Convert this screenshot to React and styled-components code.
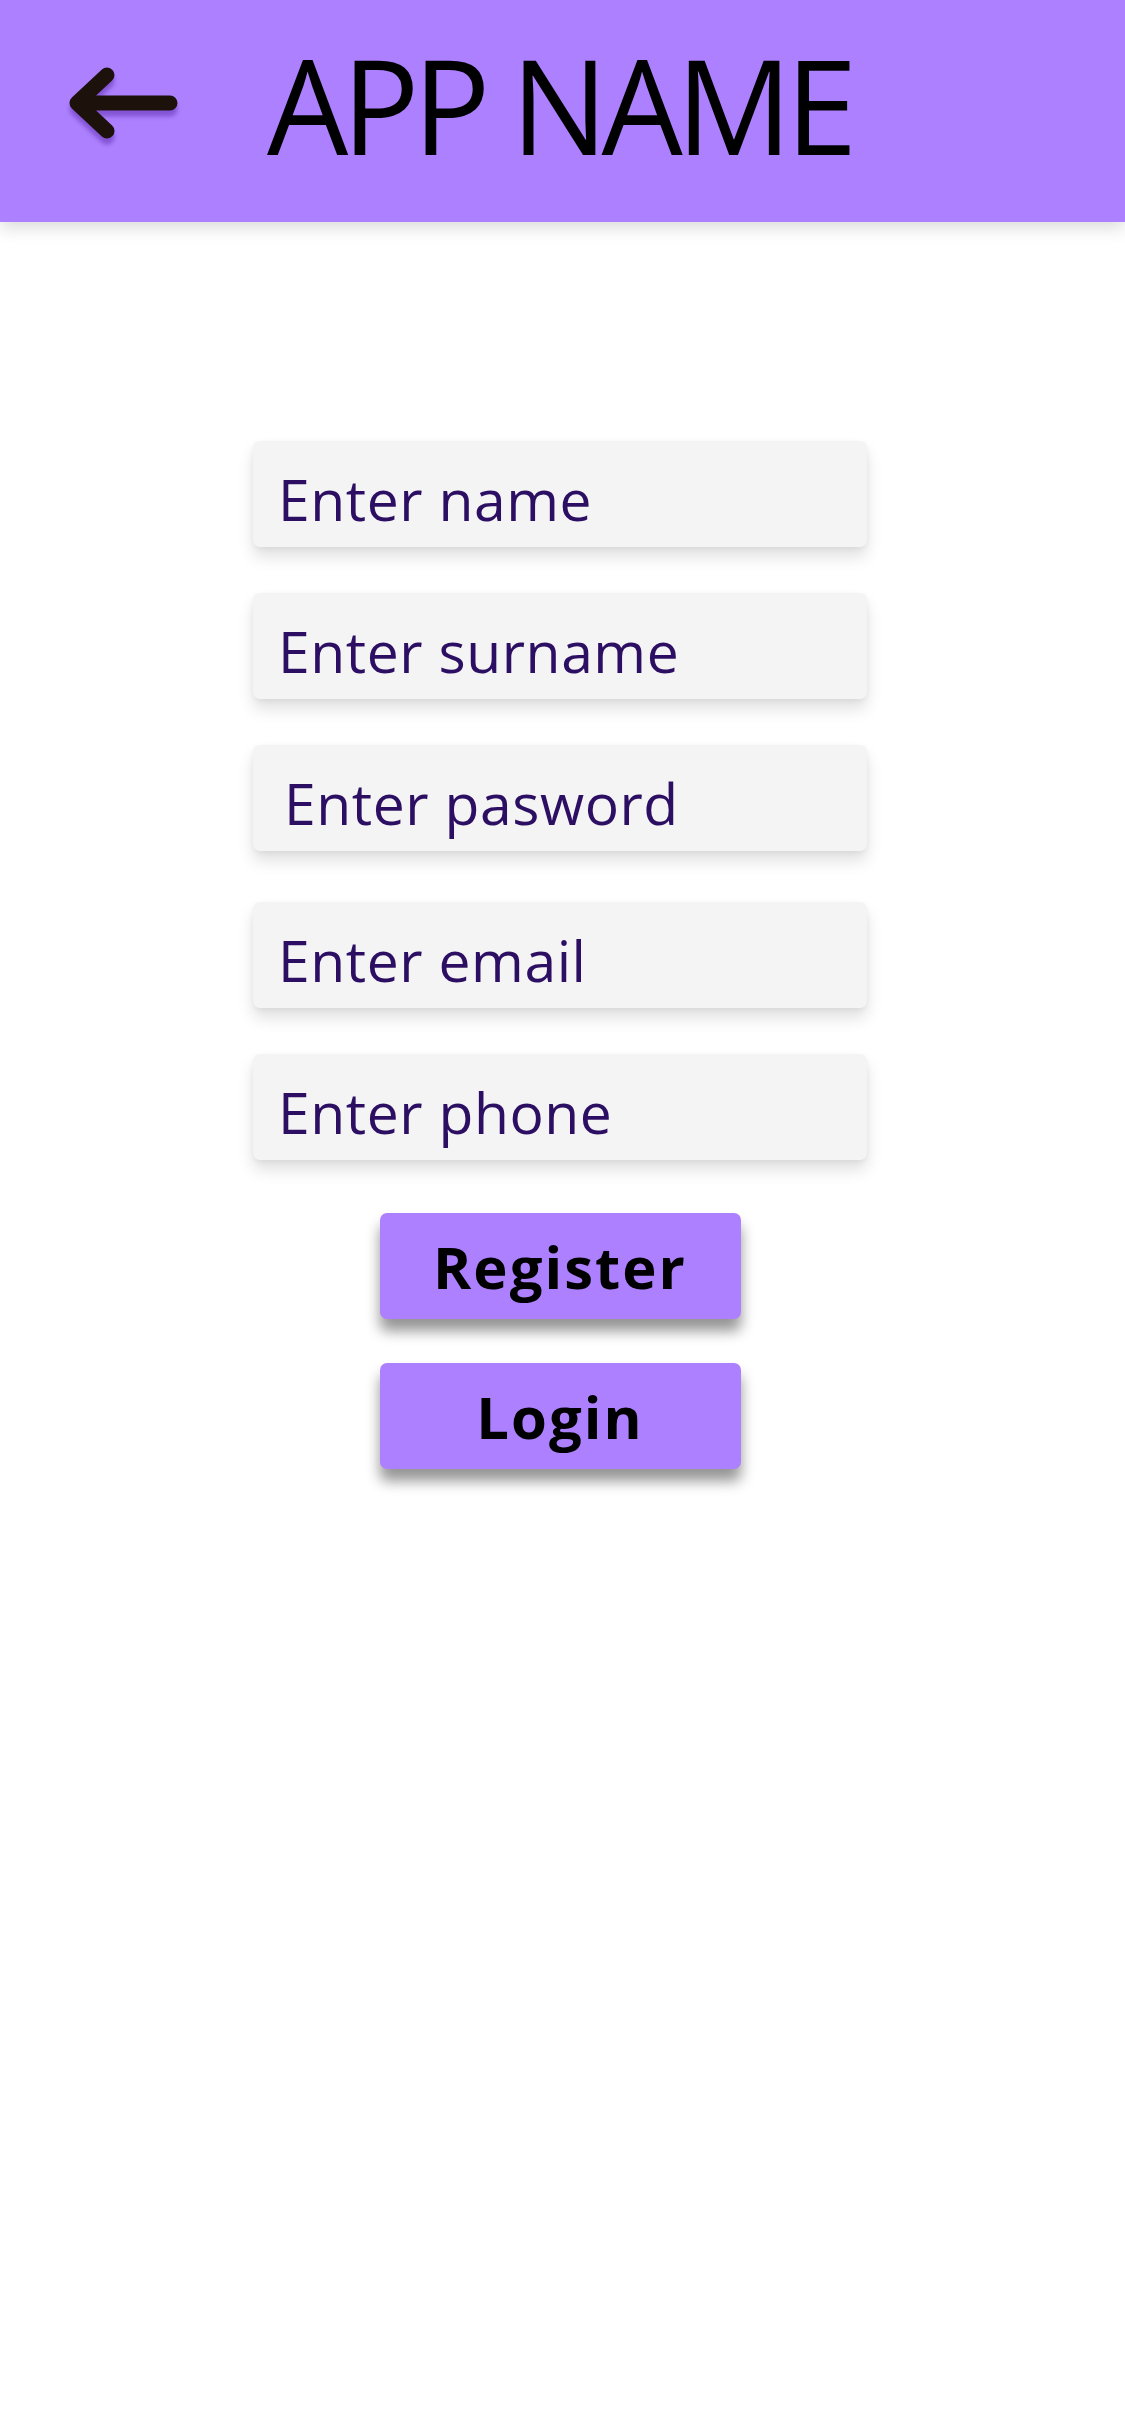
import React from "react";
import { styled, createGlobalStyle } from "styled-components";

const GlobalStyle = createGlobalStyle`
  html, body {
    margin: 0;
    padding: 0;
    background: #ffffff;
  }
  body {
    font-family: "Open Sans", "Liberation Sans", sans-serif;
  }
  * {
    box-sizing: border-box;
  }
`;

const Page = styled.div`
  width: 1125px;
  min-height: 2436px;
  background: #ffffff;
`;

const Header = styled.header`
  height: 222px;
  background: #ad80ff;
  display: flex;
  align-items: center;
  padding-left: 60px;
  box-shadow: 0 6px 16px rgba(0, 0, 0, 0.14);
  position: relative;
`;

const BackButton = styled.button`
  border: 0;
  padding: 0;
  background: transparent;
  width: 125px;
  height: 90px;
  margin-bottom: 14px;
  cursor: pointer;
  svg {
    display: block;
    filter: drop-shadow(0 6px 2px rgba(80, 30, 160, 0.45));
  }
`;

const Title = styled.h1`
  margin: 0 0 14px 82px;
  font-family: "Open Sans", "Liberation Sans", sans-serif;
  font-weight: 400;
  font-size: 132px;
  line-height: 1;
  letter-spacing: -0.05em;
  color: #000000;
  transform: scaleX(0.975);
  transform-origin: left center;
  white-space: nowrap;
`;

const Form = styled.form`
  display: flex;
  flex-direction: column;
  align-items: center;
  padding-top: 219px;
  padding-right: 5px;
`;

const Fields = styled.div`
  display: flex;
  flex-direction: column;
  gap: 46px;
`;

const Field = styled.input`
  width: 614px;
  height: 106px;
  margin-top: ${(p) => p.$shift || 0}px;
  border: 0;
  outline: none;
  border-radius: 7px;
  background: #f4f4f4;
  box-shadow: 0 10px 16px rgba(0, 0, 0, 0.12), 0 2px 5px rgba(0, 0, 0, 0.05);
  padding: 10px 0 0 ${(p) => p.$indent || 25}px;
  font-family: "Open Sans", "Liberation Sans", sans-serif;
  font-size: 57px;
  letter-spacing: 0.01em;
  color: #2c0f63;
  &::placeholder {
    color: #2c0f63;
    opacity: 1;
  }
`;

const Actions = styled.div`
  display: flex;
  flex-direction: column;
  gap: 44px;
  margin-top: 53px;
`;

const ActionButton = styled.button`
  width: 361px;
  height: 106px;
  border: 0;
  border-radius: 7px;
  background: #ad80ff;
  box-shadow: 0 12px 14px rgba(0, 0, 0, 0.42);
  font-family: "Open Sans", "Liberation Sans", sans-serif;
  font-weight: 700;
  font-size: 58px;
  letter-spacing: 0.035em;
  color: #000000;
  padding: 0;
  cursor: pointer;
`;

function ArrowLeft() {
  return (
    <svg width="125" height="90" viewBox="0 0 125 90">
      <path
        d="M110 44 H17 M47 16 L17 44 L47 72"
        fill="none"
        stroke="#1c110b"
        strokeWidth="15"
        strokeLinecap="round"
        strokeLinejoin="round"
      />
    </svg>
  );
}

const fields = [
  { placeholder: "Enter name" },
  { placeholder: "Enter surname" },
  { placeholder: "Enter pasword", indent: 31, type: "password" },
  { placeholder: "Enter email", shift: 5 },
  { placeholder: "Enter phone" },
];

export default function App() {
  return (
    <>
      <GlobalStyle />
      <Page>
        <Header>
          <BackButton type="button" aria-label="Back">
            <ArrowLeft />
          </BackButton>
          <Title>APP NAME</Title>
        </Header>
        <Form onSubmit={(e) => e.preventDefault()}>
          <Fields>
            {fields.map((f) => (
              <Field
                key={f.placeholder}
                type={f.type || "text"}
                placeholder={f.placeholder}
                $indent={f.indent}
                $shift={f.shift}
              />
            ))}
          </Fields>
          <Actions>
            <ActionButton type="submit">Register</ActionButton>
            <ActionButton type="button">Login</ActionButton>
          </Actions>
        </Form>
      </Page>
    </>
  );
}
